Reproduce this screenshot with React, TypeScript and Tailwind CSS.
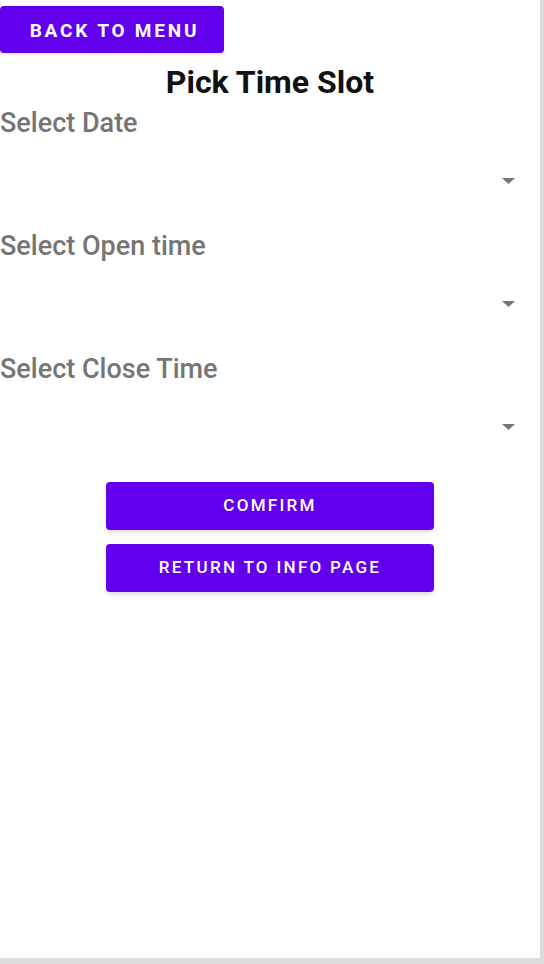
import React from "react";

function Arrow() {
  return (
    <svg width="13" height="6" viewBox="0 0 13 6" className="block">
      <path d="M0 0 L13 0 L6.5 6 Z" fill="#757575" />
    </svg>
  );
}

function Field({ label }: { label: string }) {
  return (
    <div className="flex flex-col">
      <div className="h-[30px] text-[27px] leading-[30px] font-medium text-[#757575]">{label}</div>
      <div className="h-[93px] flex items-start justify-end pr-[25px] pt-[40px]">
        <Arrow />
      </div>
    </div>
  );
}

export default function App() {
  return (
    <div className="w-[544px] h-[964px] bg-[#dcdcdc] font-['Roboto',sans-serif]">
      <div className="w-[540px] h-[958px] bg-white flex flex-col">
        <div className="pt-[6px]">
          <button className="w-[224px] h-[47px] rounded-[4px] bg-[#6200EE] text-white font-bold text-[19px] tracking-[2.8px] pl-[5px] pt-[3px] shadow-sm">
            BACK TO MENU
          </button>
        </div>
        <h1 className="text-center text-[32px] leading-[36px] font-bold text-[#111] mt-[11px]">Pick Time Slot</h1>
        <div className="mt-[8px]">
          <Field label="Select Date" />
          <Field label="Select Open time" />
          <Field label="Select Close Time" />
        </div>
        <div className="flex flex-col items-center gap-[14px] mt-[5px]">
          <button className="w-[328px] h-[48px] rounded-[4px] bg-[#6200EE] text-white font-medium text-[17px] tracking-[2.3px] shadow-md">
            COMFIRM
          </button>
          <button className="w-[328px] h-[48px] rounded-[4px] bg-[#6200EE] text-white font-medium text-[17px] tracking-[2.3px] shadow-md">
            RETURN TO INFO PAGE
          </button>
        </div>
      </div>
    </div>
  );
}
